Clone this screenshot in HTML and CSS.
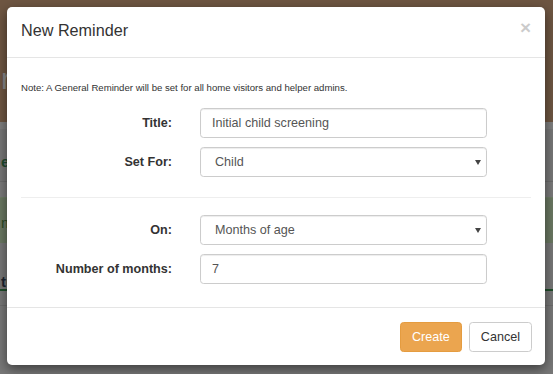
FILE: index.html
```html
<!DOCTYPE html>
<html lang="en">
<head>
<meta charset="utf-8">
<title>New Reminder</title>
<link rel="stylesheet" href="styles.css">
</head>
<body>
<div class="page">
  <header class="site-top"><span class="brand">r</span></header>
  <div class="strip"></div>
  <div class="panel"><span class="panel-text">er</span></div>
  <div class="rule"></div>
  <div class="gap"></div>
  <div class="alert"><span class="alert-text">m</span></div>
  <div class="section"><span class="section-text">tu</span></div>
  <div class="green-line"></div>
  <div class="gap2"></div>
  <div class="rule"></div>
</div>

<div class="modal">
  <div class="modal-header">
    <h4 class="modal-title">New Reminder</h4>
    <span class="close">&times;</span>
  </div>
  <div class="modal-body">
    <p class="note">Note: A General Reminder will be set for all home visitors and helper admins.</p>
    <form class="form">
      <div class="form-row">
        <label class="label">Title:</label>
        <input class="control" type="text" value="Initial child screening">
      </div>
      <div class="form-row">
        <label class="label">Set For:</label>
        <div class="select-wrap">
          <select class="control select"><option>Child</option></select>
        </div>
      </div>
      <hr class="divider">
      <div class="form-row">
        <label class="label">On:</label>
        <div class="select-wrap">
          <select class="control select"><option>Months of age</option></select>
        </div>
      </div>
      <div class="form-row">
        <label class="label">Number of months:</label>
        <input class="control" type="text" value="7">
      </div>
    </form>
  </div>
  <div class="modal-footer">
    <button class="btn btn-create" type="button">Create</button>
    <button class="btn btn-cancel" type="button">Cancel</button>
  </div>
</div>
</body>
</html>
```
FILE: styles.css
```css
* { box-sizing: border-box; }

html, body {
  margin: 0;
  padding: 0;
}

body {
  width: 553px;
  height: 374px;
  overflow: hidden;
  font-family: "Liberation Sans", Arial, sans-serif;
  font-size: 12.6px;
  color: #333;
  background: #787878;
  position: relative;
}

.page {
  width: 553px;
}
.site-top {
  height: 122px;
  background: #6e5642;
  padding: 64px 0 0 1px;
}
.brand {
  display: block;
  font-size: 30px;
  line-height: 30px;
  color: #8a8a8a;
}
.strip {
  height: 7px;
  background: #7e7e7e;
}
.panel {
  height: 52px;
  background: #777777;
  padding: 24px 0 0 1px;
}
.panel-text {
  font-size: 15px;
  font-weight: bold;
  color: #1f4a2e;
}
.rule {
  height: 1px;
  background: #6c6c6c;
}
.gap {
  height: 15px;
  background: #7a7a7a;
}
.alert {
  height: 46px;
  background: #6a7862;
  border-top: 1px solid #6e7e66;
  padding: 16px 0 0 1px;
}
.alert-text {
  font-size: 15px;
  color: #2a4a24;
}
.section {
  height: 46px;
  background: #777777;
  padding: 30px 0 0 1px;
}
.section-text {
  font-size: 15px;
  font-weight: bold;
  color: #1b2430;
}
.green-line {
  height: 2px;
  background: #1f4d2a;
}
.gap2 {
  height: 14px;
  background: #777777;
}

/* modal */
.modal {
  position: absolute;
  left: 7px;
  top: 7px;
  width: 538px;
  background: #fff;
  border-radius: 5px;
  box-shadow: 0 4px 12px rgba(0, 0, 0, 0.5);
}
.modal-header {
  display: flex;
  justify-content: space-between;
  align-items: flex-start;
  padding: 11px 14px 14px;
  border-bottom: 1px solid #e5e5e5;
}
.modal-title {
  margin: 0;
  font-size: 16.2px;
  line-height: 25px;
  font-weight: normal;
  color: #333;
}
.close {
  font-size: 19px;
  line-height: 19px;
  font-weight: bold;
  color: #000;
  opacity: 0.2;
}
.modal-body {
  padding: 14px;
}
.note {
  margin: 9px 0 14px;
  font-size: 9.6px;
  line-height: 13px;
  color: #333;
}
.form {
  display: flex;
  flex-direction: column;
  margin: 0;
}
.form-row {
  display: flex;
  align-items: center;
  margin-bottom: 9px;
}
.label {
  width: 151px;
  margin-right: 28px;
  text-align: right;
  font-weight: bold;
  color: #333;
}
.control {
  width: 287px;
  height: 30px;
  margin: 0;
  padding: 0 11px;
  border: 1px solid #ccc;
  border-radius: 3.6px;
  background: #fff;
  font-family: "Liberation Sans", Arial, sans-serif;
  font-size: 12.6px;
  color: #555;
  box-shadow: inset 0 1px 1px rgba(0, 0, 0, 0.075);
}
.select-wrap {
  position: relative;
  width: 287px;
}
.select {
  -webkit-appearance: none;
  appearance: none;
  padding-left: 14px;
  display: block;
}
.select-wrap::after {
  content: "";
  position: absolute;
  right: 6px;
  top: 13px;
  border-left: 3px solid transparent;
  border-right: 3px solid transparent;
  border-top: 5px solid #444;
}
.divider {
  border: 0;
  border-top: 1px solid #eee;
  margin: 11px 0 17px;
  height: 0;
  width: 100%;
}
.modal-footer {
  display: flex;
  justify-content: flex-end;
  gap: 7px;
  padding: 14px 13px 13px 14px;
  border-top: 1px solid #e5e5e5;
}
.btn {
  height: 30px;
  padding: 0 11px;
  border: 1px solid transparent;
  border-radius: 3.6px;
  font-family: "Liberation Sans", Arial, sans-serif;
  font-size: 12.6px;
  line-height: 28px;
}
.btn-create {
  background: #eba54f;
  border-color: #e59c40;
  color: #fff;
}
.btn-cancel {
  background: #fff;
  border-color: #ccc;
  color: #333;
}
```
